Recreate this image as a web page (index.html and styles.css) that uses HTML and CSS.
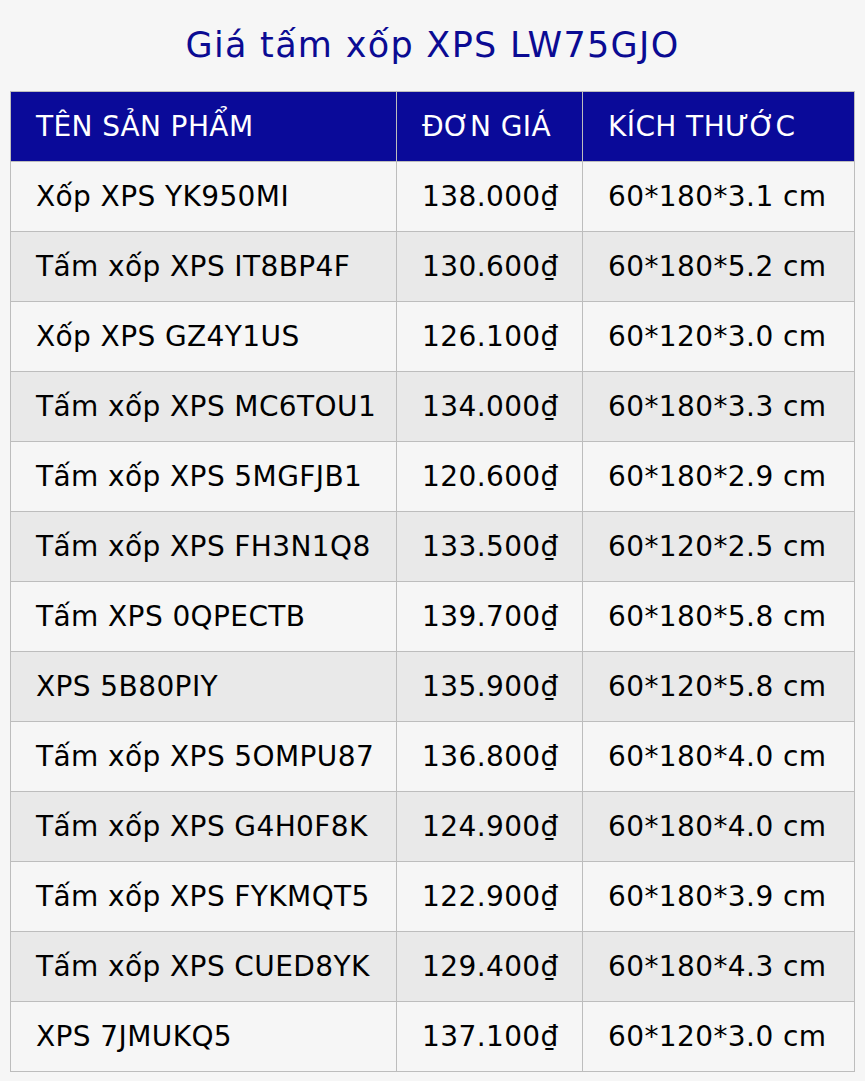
FILE: index.html
```html
<!DOCTYPE html>
<html lang="vi">
<head>
<meta charset="utf-8">
<title>Giá tấm xốp XPS LW75GJO</title>
<link rel="stylesheet" href="styles.css">
</head>
<body>
<h1 class="title">Giá tấm xốp XPS LW75GJO</h1>
<table class="price-table">
  <thead>
    <tr><th class="c-name">TÊN SẢN PHẨM</th><th class="c-price">ĐƠN GIÁ</th><th class="c-size">KÍCH THƯỚC</th></tr>
  </thead>
  <tbody>
    <tr><td>Xốp XPS YK950MI</td><td>138.000₫</td><td>60*180*3.1 cm</td></tr>
    <tr><td>Tấm xốp XPS IT8BP4F</td><td>130.600₫</td><td>60*180*5.2 cm</td></tr>
    <tr><td>Xốp XPS GZ4Y1US</td><td>126.100₫</td><td>60*120*3.0 cm</td></tr>
    <tr><td>Tấm xốp XPS MC6TOU1</td><td>134.000₫</td><td>60*180*3.3 cm</td></tr>
    <tr><td>Tấm xốp XPS 5MGFJB1</td><td>120.600₫</td><td>60*180*2.9 cm</td></tr>
    <tr><td>Tấm xốp XPS FH3N1Q8</td><td>133.500₫</td><td>60*120*2.5 cm</td></tr>
    <tr><td>Tấm XPS 0QPECTB</td><td>139.700₫</td><td>60*180*5.8 cm</td></tr>
    <tr><td>XPS 5B80PIY</td><td>135.900₫</td><td>60*120*5.8 cm</td></tr>
    <tr><td>Tấm xốp XPS 5OMPU87</td><td>136.800₫</td><td>60*180*4.0 cm</td></tr>
    <tr><td>Tấm xốp XPS G4H0F8K</td><td>124.900₫</td><td>60*180*4.0 cm</td></tr>
    <tr><td>Tấm xốp XPS FYKMQT5</td><td>122.900₫</td><td>60*180*3.9 cm</td></tr>
    <tr><td>Tấm xốp XPS CUED8YK</td><td>129.400₫</td><td>60*180*4.3 cm</td></tr>
    <tr><td>XPS 7JMUKQ5</td><td>137.100₫</td><td>60*120*3.0 cm</td></tr>
  </tbody>
</table>
</body>
</html>
```
FILE: styles.css
```css
html, body {
  background: #f6f6f6;
}
body {
  margin: 0;
  padding: 0 10px;
  font-family: "DejaVu Sans", Verdana, sans-serif;
  color: #000;
}
.title {
  margin: 0;
  padding: 23px 0 24px;
  text-align: center;
  font-weight: normal;
  font-size: 35px;
  letter-spacing: 1.3px;
  line-height: 44px;
  color: #0b0b93;
}
.price-table {
  width: 100%;
  table-layout: fixed;
  border-collapse: collapse;
  font-size: 28px;
  letter-spacing: 0.4px;
}
.price-table th,
.price-table td {
  border: 1px solid #bdbdbd;
  padding: 20px 25px;
  line-height: 29px;
  text-align: left;
  font-weight: normal;
  white-space: nowrap;
  overflow: hidden;
}
.price-table th {
  background: #0a0a99;
  color: #fff;
}
.c-name { width: 335px; }
.c-price { width: 135px; }
.price-table tbody tr:nth-child(odd) td { background: #f6f6f6; }
.price-table tbody tr:nth-child(even) td { background: #e9e9e9; }
```
